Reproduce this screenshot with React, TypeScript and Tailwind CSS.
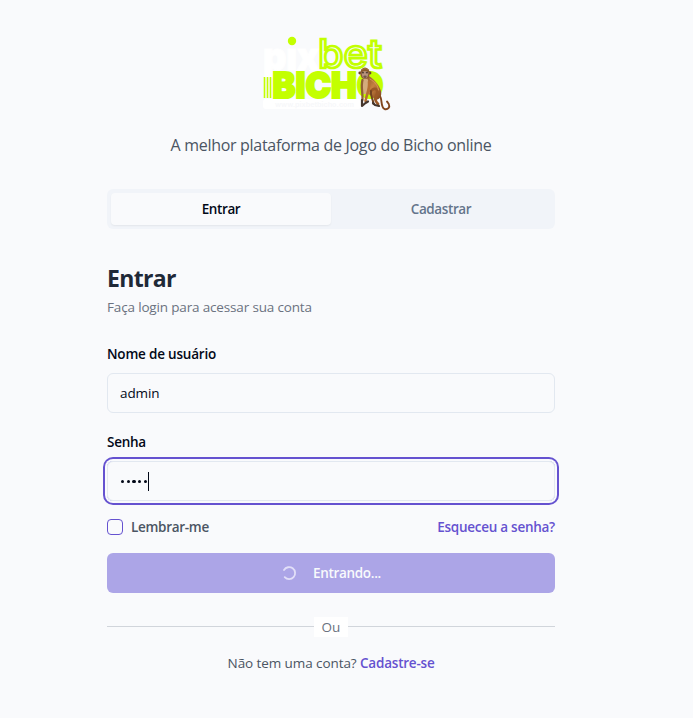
import type { ReactNode } from "react";

function Monkey() {
  return (
    <g strokeLinecap="round" strokeLinejoin="round">
      <path d="M379 95 C383 98 380 107 384.500 109 C388 110 390 107 389 104.500 C388.500 103 387.500 102.500 387 101.500" stroke="#80451d" strokeWidth="1.900" fill="none" />
      <path d="M367 75 C373 78 379 84 381 91 C382 96 380 99 376 100 L370 95 L364 92 C361 86 363 78 367 75Z" fill="url(#fur)" />
      <path d="M362 79 C360 84 361 89 362 94 L367 94 C369 89 370 83 367 78Z" fill="#d4ab7c" />
      <path d="M362.500 80 C360.500 87 363 92 362.500 100" stroke="#916035" strokeWidth="2.300" fill="none" />
      <path d="M369 82 C370 88 367 93 365.500 101" stroke="#b56f34" strokeWidth="2.600" fill="none" />
      <path d="M371 91 C376 86 379 91 376 96 C374.500 99 376 102 378 104" stroke="#9b5826" strokeWidth="2.800" fill="none" />
      <path d="M371 91 C370 96 373 98 373.500 104" stroke="#704420" strokeWidth="2" fill="none" />
      <path d="M362 100 L362 106 L365.500 103 L368 101.500 M373 103 L375 105 L379 106" stroke="#44352d" strokeWidth="2.200" fill="none" />
      <path d="M370 79 C375 82 378 86 378.500 90" stroke="#d69a57" strokeWidth="1" fill="none" />
      <circle cx="359.800" cy="73" r="1.400" fill="#6b4327" />
      <circle cx="370" cy="73" r="1.400" fill="#6b4327" />
      <ellipse cx="365" cy="73.300" rx="4.800" ry="5.800" fill="#8b5b2d" />
      <path d="M361.500 72.500 Q365 69.500 368.500 72.500 L367.500 77 Q365 80 362.500 77Z" fill="#b7937c" />
      <path d="M362.300 72.700 H363.500 M366.300 72.700 H367.500" stroke="#30221b" strokeWidth="1.100" />
      <ellipse cx="365" cy="76.700" rx="1.700" ry="1.300" fill="#74564b" />
      <path d="M362 69.300 Q365 67.500 368 69.300" stroke="#a9713b" strokeWidth="1" fill="none" />
    </g>
  );
}

function Logo() {
  return (
    <svg width="145" height="90" viewBox="255 30 145 90" className="block" role="img" aria-label="pixbet bicho">
      <defs>
        <linearGradient id="fur" x1="0" x2="1" y1="0" y2="1">
          <stop stopColor="#7d4c28" />
          <stop offset=".5" stopColor="#c58040" />
          <stop offset="1" stopColor="#7b4118" />
        </linearGradient>
      </defs>
      <g fontFamily="Inter, sans-serif" fontWeight="900">
        <text x="263" y="69.500" fontSize="38" fill="#ffffff" stroke="#ffffff" strokeWidth="1.200" textLength="56" lengthAdjust="spacingAndGlyphs">pıx</text>
        <circle cx="292" cy="41" r="4.200" fill="#c3ff00" />
        <text x="318" y="68" fontSize="40" fontWeight="500" fill="#f9fafc" stroke="#c3ff00" strokeWidth="2.700" textLength="64" lengthAdjust="spacingAndGlyphs">bet</text>
        <rect x="263" y="99" width="98" height="10" rx="3" fill="#ffffff" />
        <text x="275" y="107" fontSize="6.500" fontWeight="700" fill="#f7f8fa" textLength="79" lengthAdjust="spacingAndGlyphs">www.pixbetbicho.com</text>
        <path d="M264.500 77V98 M267.500 77V98 M270.500 77V98" stroke="#c3ff00" strokeWidth="1.600" />
        <text x="272.500" y="97.500" fontSize="36" fill="#c3ff00" stroke="#c3ff00" strokeWidth="2" textLength="111" lengthAdjust="spacingAndGlyphs">BICHO</text>
      </g>
      <Monkey />
    </svg>
  );
}

function Field({ label, labelClass, children }: { label: string; labelClass: string; children: ReactNode }) {
  return (
    <div>
      <div className={`h-5 text-[13.5px] leading-5 font-semibold text-[#020817] ${labelClass}`}>{label}</div>
      {children}
    </div>
  );
}

export default function App() {
  return (
    <main className="h-[718px] w-full bg-[#f9fafc] pt-[30px] font-['Open_Sans','Noto_Sans',sans-serif] text-[13.5px] leading-5">
      <div className="flex w-[662px] flex-col items-center">
        <div className="mr-[7px] h-[90px]"><Logo /></div>
        <p className="mt-[13px] h-6 text-base leading-6 tracking-[-0.3px] whitespace-nowrap text-[#4b5563]">A melhor plataforma de Jogo do Bicho online</p>

        <div className="mt-8 grid h-10 w-[448px] grid-cols-2 rounded-md bg-[#f1f4f9] p-1 text-center font-semibold">
          <div className="h-8 rounded-sm bg-[#f9fafc] leading-[33px] tracking-[-0.4px] text-[#020817] shadow-[0_1px_2px_rgba(0,0,0,0.06)]">Entrar</div>
          <div className="h-8 leading-[33px] tracking-[-0.4px] text-[#64748b]">Cadastrar</div>
        </div>

        <div className="mt-[34px] w-[448px]">
          <h1 className="h-8 text-[23px] leading-[30px] font-bold tracking-[-0.65px] text-[#1f2937]">Entrar</h1>
          <p className="mt-0.5 h-5 leading-[21px] tracking-[-0.16px] text-[#6b7280]">Faça login para acessar sua conta</p>

          <div className="mt-[27px]">
            <Field label="Nome de usuário" labelClass="tracking-[-0.2px]">
              <div className="mt-[9px] flex h-10 items-center rounded-md border border-[#e2e8f0] px-3 tracking-[-0.1px] text-[#020817]">admin</div>
            </Field>
          </div>
          <div className="mt-[19px]">
            <Field label="Senha" labelClass="tracking-[-0.25px]">
              <div className="mt-[9px] flex h-10 items-center rounded-md border border-[#e2e8f0] px-3 ring-2 ring-[#6552d0] ring-offset-2 ring-offset-[#f9fafc]">
                <div className="ml-[1px] flex gap-[2.4px]">
                  {[0, 1, 2, 3, 4].map((n) => <span key={n} className="mt-px size-[3.3px] rounded-full bg-[#020817]" />)}
                </div>
                <span className="ml-px h-[19px] w-px bg-[#020817]" />
              </div>
            </Field>
          </div>

          <div className="mt-4 flex h-5 items-center">
            <span className="size-4 rounded-sm border border-[#6552d0]" />
            <span className="ml-2 font-semibold tracking-[-0.3px] text-[#4b5563]">Lembrar-me</span>
            <span className="ml-auto font-semibold tracking-[-0.26px] text-[#6552d0]">Esqueceu a senha?</span>
          </div>

          <div className="mt-4 flex h-10 items-center rounded-md bg-[#aca5e7] pl-[174px] font-semibold text-[#f8fafc]">
            <svg className="size-4" viewBox="0 0 16 16" fill="none" aria-hidden="true">
              <path d="M3 5 A6 6 0 1 1 3.700 12.200" stroke="#e2dff8" strokeWidth="1.800" strokeLinecap="round" />
            </svg>
            <span className="ml-4 tracking-[-0.32px]">Entrando...</span>
          </div>

          <div className="mt-6 flex h-5 items-center">
            <span className="-mt-px h-px flex-1 bg-[#d1d5db]" />
            <span className="h-5 w-[34px] bg-white text-center leading-[21px] text-[#6b7280]">Ou</span>
            <span className="-mt-px h-px flex-1 bg-[#d1d5db]" />
          </div>
          <p className="mt-4 text-center leading-[21px] tracking-[-0.08px] whitespace-nowrap text-[#4b5563]">Não tem uma conta? <span className="font-semibold tracking-[-0.22px] text-[#6552d0]">Cadastre-se</span></p>
        </div>
      </div>
    </main>
  );
}
